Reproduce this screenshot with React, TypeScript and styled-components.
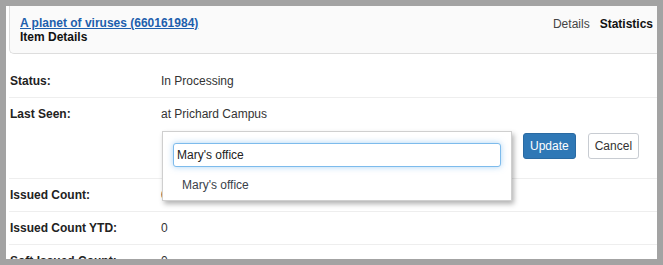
import React from 'react';
import styled, { createGlobalStyle } from 'styled-components';

const GlobalStyle = createGlobalStyle`
	html, body {
		margin: 0;
		padding: 0;
		background: #a3a3a3;
	}
	body {
		font-family: 'Liberation Sans', Arial, sans-serif;
		font-size: 12px;
		line-height: 14px;
		color: #333;
	}
`;

const Frame = styled.div`
	padding: 6px;
	width: 663px;
	height: 265px;
	box-sizing: border-box;
`;

const Panel = styled.div`
	background: #fff;
	height: 253px;
	overflow: hidden;
`;

const Header = styled.div`
	margin-left: 3px;
	display: flex;
	justify-content: space-between;
	align-items: flex-start;
	padding: 10px 4px 9px 10px;
	background: #fafafa;
	border-left: 1px solid #ddd;
	border-bottom: 1px solid #ddd;
	border-bottom-left-radius: 5px;
`;

const TitleLink = styled.a`
	display: block;
	color: #1d5fad;
	font-weight: bold;
	text-decoration: underline;
`;

const Subtitle = styled.div`
	font-weight: bold;
	color: #111;
`;

const Tabs = styled.div`
	display: flex;
	gap: 10px;
	padding-top: 1px;
`;

const Tab = styled.span<{ $active?: boolean }>`
	color: ${({ $active }) => ($active ? '#111' : '#444')};
	font-weight: ${({ $active }) => ($active ? 'bold' : 'normal')};
`;

const List = styled.div`
	margin: 11px 0 0 3px;
`;

const Row = styled.div`
	display: grid;
	grid-template-columns: 151px 1fr;
	padding: 9px 1px 9px;
	border-bottom: 1px solid #eee;
`;

const Label = styled.div`
	font-weight: bold;
	color: #222;
`;

const Value = styled.div`
	color: #333;
`;

const Editor = styled.div`
	display: flex;
	align-items: flex-start;
	margin: 10px 0 10px 1px;
`;

const ComboWrap = styled.div`
	position: relative;
	width: 350px;
	height: 28px;
	margin-right: 11px;
`;

const Popup = styled.div`
	position: absolute;
	top: 0;
	left: 0;
	right: 0;
	z-index: 2;
	background: #fff;
	border: 1px solid #cfcfcf;
	box-shadow: 2px 3px 5px rgba(0, 0, 0, 0.3);
	padding: 11px 10px 3px;
`;

const SearchInput = styled.input`
	display: block;
	width: 100%;
	height: 24px;
	box-sizing: border-box;
	padding: 0 3px;
	font: inherit;
	color: #222;
	border: 1px solid #7dbbec;
	border-radius: 3px;
	box-shadow: 0 0 6px rgba(102, 175, 233, 0.55);
	outline: none;
	caret-color: #000;
`;

const Option = styled.div`
	padding: 11px 0 5px 9px;
	color: #3a3f4a;
`;

const Button = styled.button<{ $primary?: boolean }>`
	font: inherit;
	height: 26px;
	padding: 0 6px;
	margin-top: 2px;
	margin-right: 12px;
	border-radius: 3px;
	cursor: pointer;
	color: ${({ $primary }) => ($primary ? '#fff' : '#333')};
	background: ${({ $primary }) => ($primary ? '#2f78b6' : '#fff')};
	border: 1px solid ${({ $primary }) => ($primary ? '#2a6aa2' : '#c8ccd2')};
`;

const stats = [
	{ label: 'Issued Count:', value: '0' },
	{ label: 'Issued Count YTD:', value: '0' },
	{ label: 'Soft Issued Count:', value: '0' },
];

export default function App() {
	return (
		<>
			<GlobalStyle />
			<Frame>
				<Panel>
					<Header>
						<div>
							<TitleLink href="#">A planet of viruses (660161984)</TitleLink>
							<Subtitle>Item Details</Subtitle>
						</div>
						<Tabs>
							<Tab>Details</Tab>
							<Tab $active>Statistics</Tab>
						</Tabs>
					</Header>
					<List>
						<Row>
							<Label>Status:</Label>
							<Value>In Processing</Value>
						</Row>
						<Row>
							<Label>Last Seen:</Label>
							<Value>
								at Prichard Campus
								<Editor>
									<ComboWrap>
										<Popup>
											<SearchInput defaultValue="Mary's office" autoFocus />
											<Option>Mary's office</Option>
										</Popup>
									</ComboWrap>
									<Button $primary>Update</Button>
									<Button>Cancel</Button>
								</Editor>
							</Value>
						</Row>
						{stats.map((s) => (
							<Row key={s.label}>
								<Label>{s.label}</Label>
								<Value>{s.value}</Value>
							</Row>
						))}
					</List>
				</Panel>
			</Frame>
		</>
	);
}
